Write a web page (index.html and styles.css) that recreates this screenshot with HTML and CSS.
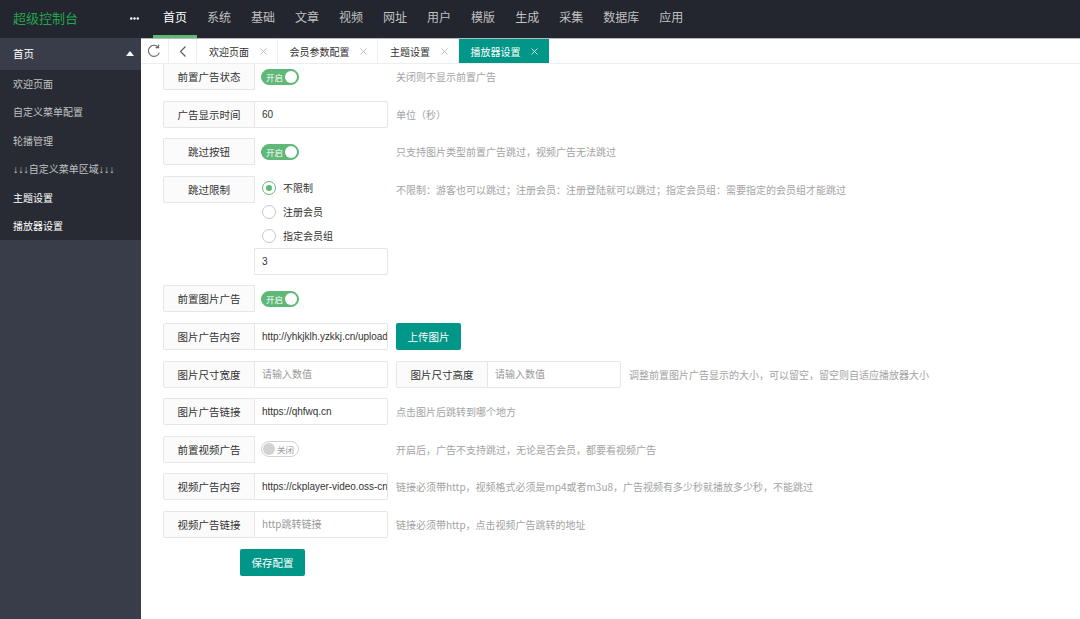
FILE: index.html
```html
<!DOCTYPE html>
<html lang="zh-CN">
<head>
<meta charset="utf-8">
<title>超级控制台</title>
<link rel="stylesheet" href="styles.css">
</head>
<body>
<header class="header">
  <div class="logo">超级控制台</div>
  <div class="more">
    <svg width="9" height="3" viewBox="0 0 9 3"><circle cx="1.2" cy="1.5" r="1.2" fill="#fff"/><circle cx="4.5" cy="1.5" r="1.2" fill="#fff"/><circle cx="7.8" cy="1.5" r="1.2" fill="#fff"/></svg>
  </div>
  <ul class="topnav">
    <li class="active">首页</li>
    <li>系统</li>
    <li>基础</li>
    <li>文章</li>
    <li>视频</li>
    <li>网址</li>
    <li>用户</li>
    <li>模版</li>
    <li>生成</li>
    <li>采集</li>
    <li>数据库</li>
    <li>应用</li>
  </ul>
</header>
<div class="layout">
  <aside class="side">
    <div class="side-title"><span>首页</span><span class="tri"></span></div>
    <ul class="side-child">
      <li>欢迎页面</li>
      <li>自定义菜单配置</li>
      <li>轮播管理</li>
      <li><span class="arr">↓↓↓</span>自定义菜单区域<span class="arr">↓↓↓</span></li>
      <li class="lit">主题设置</li>
      <li class="lit">播放器设置</li>
    </ul>
  </aside>
  <main class="main">
    <div class="tabbar">
      <div class="tool">
        <svg width="15" height="14" viewBox="0 0 15 14"><path d="M12.3 8.6A5.6 5.6 0 1 1 11.2 3.1" fill="none" stroke="#666" stroke-width="1.1"/><path d="M11.6 0.6 L11.6 3.6 L8.6 3.6" fill="none" stroke="#666" stroke-width="1.1"/></svg>
      </div>
      <div class="tool">
        <svg width="8" height="11" viewBox="0 0 8 11"><path d="M6.5 0.5 L1.5 5.5 L6.5 10.5" fill="none" stroke="#555" stroke-width="1.1"/></svg>
      </div>
      <div class="tab">欢迎页面<span class="close"><svg width="7" height="7" viewBox="0 0 7 7"><path d="M0.5 0.5L6.5 6.5M6.5 0.5L0.5 6.5" stroke="#b5b5b5" stroke-width="0.9"/></svg></span></div>
      <div class="tab">会员参数配置<span class="close"><svg width="7" height="7" viewBox="0 0 7 7"><path d="M0.5 0.5L6.5 6.5M6.5 0.5L0.5 6.5" stroke="#b5b5b5" stroke-width="0.9"/></svg></span></div>
      <div class="tab">主题设置<span class="close"><svg width="7" height="7" viewBox="0 0 7 7"><path d="M0.5 0.5L6.5 6.5M6.5 0.5L0.5 6.5" stroke="#b5b5b5" stroke-width="0.9"/></svg></span></div>
      <div class="tab active">播放器设置<span class="close"><svg width="7" height="7" viewBox="0 0 7 7"><path d="M0.5 0.5L6.5 6.5M6.5 0.5L0.5 6.5" stroke="#d8efec" stroke-width="0.9"/></svg></span></div>
    </div>
    <div class="content">
      <form class="form">
        <div class="item">
          <label class="label">前置广告状态</label>
          <div class="block pad"><span class="switch on"><em>开启</em><i></i></span></div>
          <div class="help">关闭则不显示前置广告</div>
        </div>
        <div class="item">
          <label class="label">广告显示时间</label>
          <div class="block"><input class="input" value="60"></div>
          <div class="help">单位（秒）</div>
        </div>
        <div class="item">
          <label class="label">跳过按钮</label>
          <div class="block pad"><span class="switch on"><em>开启</em><i></i></span></div>
          <div class="help">只支持图片类型前置广告跳过，视频广告无法跳过</div>
        </div>
        <div class="item">
          <label class="label">跳过限制</label>
          <div class="block">
            <div class="radio checked"><i></i>不限制</div>
            <div class="radio"><i></i>注册会员</div>
            <div class="radio"><i></i>指定会员组</div>
            <input class="input" value="3">
          </div>
          <div class="help">不限制：游客也可以跳过；注册会员：注册登陆就可以跳过；指定会员组：需要指定的会员组才能跳过</div>
        </div>
        <div class="item">
          <label class="label">前置图片广告</label>
          <div class="block pad"><span class="switch on"><em>开启</em><i></i></span></div>
        </div>
        <div class="item">
          <label class="label">图片广告内容</label>
          <div class="block"><input class="input" value="http://yhkjklh.yzkkj.cn/upload/ad.jpg"></div>
          <button type="button" class="btn upload">上传图片</button>
        </div>
        <div class="item">
          <label class="label">图片尺寸宽度</label>
          <div class="block"><input class="input" placeholder="请输入数值"></div>
          <label class="label second">图片尺寸高度</label>
          <div class="block"><input class="input" placeholder="请输入数值"></div>
          <div class="help">调整前置图片广告显示的大小，可以留空，留空则自适应播放器大小</div>
        </div>
        <div class="item">
          <label class="label">图片广告链接</label>
          <div class="block"><input class="input" value="https://qhfwq.cn"></div>
          <div class="help">点击图片后跳转到哪个地方</div>
        </div>
        <div class="item">
          <label class="label">前置视频广告</label>
          <div class="block pad"><span class="switch off"><i></i><em>关闭</em></span></div>
          <div class="help">开启后，广告不支持跳过，无论是否会员，都要看视频广告</div>
        </div>
        <div class="item">
          <label class="label">视频广告内容</label>
          <div class="block"><input class="input" value="https://ckplayer-video.oss-cn-shanghai.aliyuncs.com/ad.mp4"></div>
          <div class="help">链接必须带http，视频格式必须是mp4或者m3u8，广告视频有多少秒就播放多少秒，不能跳过</div>
        </div>
        <div class="item">
          <label class="label">视频广告链接</label>
          <div class="block"><input class="input" placeholder="http跳转链接"></div>
          <div class="help">链接必须带http，点击视频广告跳转的地址</div>
        </div>
        <div class="item">
          <button type="button" class="btn save">保存配置</button>
        </div>
      </form>
    </div>
  </main>
</div>
</body>
</html>
```

FILE: styles.css
```css
* { box-sizing: border-box; }
html, body { margin: 0; padding: 0; }
body {
  width: 1080px;
  height: 619px;
  overflow: hidden;
  font-family: "Noto Sans CJK SC", "Liberation Sans", sans-serif;
  background: #fff;
  color: #333;
}
ul { list-style: none; margin: 0; padding: 0; }

/* header */
.header {
  height: 38px;
  background: #23262e;
  display: flex;
  align-items: stretch;
}
.logo {
  width: 130px;
  padding-left: 13px;
  color: #22a44f;
  font-size: 13px;
  line-height: 36px;
}
.more {
  width: 23px;
  display: flex;
  align-items: center;
  padding-bottom: 2px;
}
.more svg { display: block; }
.topnav { display: flex; }
.topnav li {
  padding: 0 10px;
  font-size: 12px;
  line-height: 34px;
  color: rgba(255,255,255,.72);
  border-bottom: 3px solid transparent;
}
.topnav li.active {
  color: #fff;
  border-bottom-color: #5fb878;
}

/* layout */
.layout {
  display: flex;
  height: 581px;
}
.side {
  width: 141px;
  flex: none;
  background: #393d49;
}
.side-title {
  height: 32px;
  display: flex;
  align-items: center;
  justify-content: space-between;
  padding: 0 7px 1px 13px;
  color: #fff;
  font-size: 10.5px;
}
.tri {
  width: 0;
  height: 0;
  border-left: 4.5px solid transparent;
  border-right: 4.5px solid transparent;
  border-bottom: 5px solid #fff;
}
.side-child { background: #282b33; }
.side-child li {
  height: 28.4px;
  line-height: 28.4px;
  padding-left: 13px;
  font-size: 10px;
  color: rgba(255,255,255,.72);
  white-space: nowrap;
}
.side-child li.lit { color: #fff; }
.side-child .arr {
  font-family: "Liberation Sans", sans-serif;
  font-size: 10.5px;
}

/* main */
.main {
  flex: 1;
  display: flex;
  flex-direction: column;
  min-width: 0;
}
.tabbar {
  height: 26px;
  flex: none;
  display: flex;
  border-top: 1px solid #b8b9bd;
  border-bottom: 1px solid #eeeeee;
  background: #fff;
  position: relative;
  z-index: 2;
}
.tool {
  width: 28px;
  display: flex;
  align-items: center;
  justify-content: center;
  border-right: 1px solid #eeeeee;
}
.tool svg { display: block; }
.tab {
  display: flex;
  align-items: center;
  padding: 0 10px 0 12px;
  font-size: 10px;
  color: #333;
  border-right: 1px solid #eeeeee;
  white-space: nowrap;
}
.tab .close { margin-left: 10.5px; display: flex; }
.tab.active {
  background: #009688;
  color: #fff;
  border-right-color: #009688;
}

.content {
  flex: 1;
  overflow: hidden;
  padding-left: 22px;
}
.form { margin-top: -1px; }
.item {
  display: flex;
  align-items: flex-start;
  margin-bottom: 10.6px;
}
.label {
  width: 92px;
  height: 27px;
  flex: none;
  display: flex;
  align-items: center;
  justify-content: center;
  border: 1px solid #e6e6e6;
  border-radius: 2px 0 0 2px;
  background: #fbfbfb;
  font-size: 10.5px;
  color: #333;
}
.label.second { margin-left: 8px; }
.block {
  width: 134px;
  flex: none;
  margin-left: -1px;
}
.block.pad { padding-left: 7px; height: 27px; display: flex; align-items: center; }
.input {
  display: block;
  width: 134px;
  height: 27px;
  margin: 0;
  padding: 0 0 0 7px;
  border: 1px solid #e6e6e6;
  border-radius: 0 2px 2px 0;
  font-family: "Liberation Sans", "Noto Sans CJK SC", sans-serif;
  font-size: 10px;
  letter-spacing: -0.03px;
  color: #333;
  background: #fff;
  outline: none;
}
.input::placeholder {
  color: #999;
  font-family: "Noto Sans CJK SC", "Liberation Sans", sans-serif;
}
.help {
  margin-left: 8px;
  line-height: 27px;
  font-size: 10px;
  color: #a3a3a3;
  white-space: nowrap;
}

/* switch */
.switch {
  width: 38px;
  height: 16px;
  border-radius: 8px;
  display: flex;
  align-items: center;
  font-size: 8.5px;
  white-space: nowrap;
  flex: none;
}
.switch em { font-style: normal; }
.switch i {
  width: 12px;
  height: 12px;
  border-radius: 50%;
  display: block;
  flex: none;
}
.switch.on {
  background: #5fb878;
  border: 1px solid #5fb878;
  justify-content: space-between;
  padding: 0 1px 0 4px;
  color: #fff;
}
.switch.on i { background: #fff; }
.switch.off {
  background: #fff;
  border: 1px solid #d2d2d2;
  padding: 0 0 0 1px;
  color: #999;
  gap: 2px;
}
.switch.off i { background: #d2d2d2; }

/* radio */
.radio {
  height: 24px;
  display: flex;
  align-items: center;
  padding-left: 8px;
  font-size: 10px;
  color: #333;
}
.radio i {
  width: 14px;
  height: 14px;
  border-radius: 50%;
  border: 1px solid #c8c8c8;
  margin-right: 7px;
  display: flex;
  align-items: center;
  justify-content: center;
}
.radio.checked i { border-color: #5fb878; }
.radio.checked i::after {
  content: "";
  width: 6px;
  height: 6px;
  border-radius: 50%;
  background: #5fb878;
}

/* buttons */
.btn {
  height: 27px;
  width: 65px;
  border: 0;
  border-radius: 2px;
  background: #009688;
  color: #fff;
  font-family: "Noto Sans CJK SC", sans-serif;
  font-size: 10.5px;
  padding: 0;
}
.btn.upload { margin-left: 8px; }
.btn.save { margin-left: 77px; }
```
